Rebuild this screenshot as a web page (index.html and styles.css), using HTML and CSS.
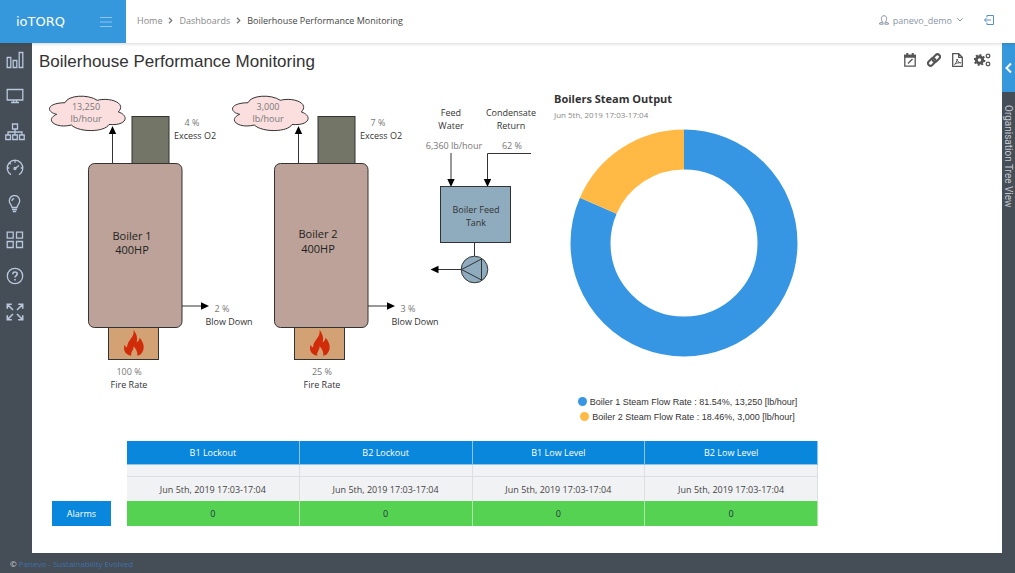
FILE: index.html
```html
<!DOCTYPE html>
<html lang="en">
  <head>
    <meta charset="UTF-8" />
    <meta name="viewport" content="width=device-width, initial-scale=1.0" />
    <title>Boilerhouse Performance Monitoring</title>
    <link rel="stylesheet" href="styles.css" />
  </head>
  <body>
    <header class="topbar">
      <div class="brand">
        <a class="logo" href="#">ioTORQ</a>
        <button class="menu-toggle" type="button" aria-label="Toggle menu">
          <svg width="12" height="10" viewBox="0 0 12 10"><path d="M0 .5h12M0 5h12M0 9.500h12" /></svg>
        </button>
      </div>
      <nav class="breadcrumb" aria-label="Breadcrumb">
        <a href="#">Home</a>
        <svg width="5" height="7" viewBox="0 0 5 7"><path d="M1 .8l2.700 2.700L1 6.200" /></svg>
        <a href="#">Dashboards</a>
        <svg width="5" height="7" viewBox="0 0 5 7"><path d="M1 .8l2.700 2.700L1 6.200" /></svg>
        <span class="current">Boilerhouse Performance Monitoring</span>
      </nav>
      <div class="account">
        <button class="user" type="button">
          <svg width="10" height="10" viewBox="0 0 10 10"><path d="M3.800 7.200C2.300 5.800 2.400 4.500 2.400 3.200 2.400 1.700 3.500.7 5 .7s2.600 1 2.600 2.500c0 1.300.1 2.600-1.400 4M3.800 7.200L.6 8v1.200h3.600zM6.200 7.200l3.200.8v1.200H5.800z" /></svg>
          panevo_demo
          <svg width="8" height="6" viewBox="0 0 8 6"><path d="M1.200 1.200L4 4l2.800-2.800" /></svg>
        </button>
        <a class="logout" href="#" aria-label="Log out">
          <svg width="10" height="10" viewBox="0 0 10 10"><path d="M3 2.500V.5h6.500v9H3v-2M.5 5H7M2.500 3l-2 2 2 2" /></svg>
        </a>
      </div>
    </header>

    <div class="page">
      <nav class="sidebar" aria-label="Main">
        <a href="#" aria-label="Reports">
          <svg viewBox="0 0 18 18"><path d="M1.200 6.500h3.600v10H1.200zM7.200 9.500h3.600v7H7.200zM13.200 1.500h3.600v15h-3.600z" /></svg>
        </a>
        <a href="#" aria-label="Dashboards">
          <svg viewBox="0 0 18 18"><path d="M1.200 2.500h15.600v10.500H1.200zM7.500 13v2M10.500 13v2M5 15.500h8" /></svg>
        </a>
        <a href="#" aria-label="Organisation">
          <svg class="wide" viewBox="0 0 20 18"><path d="M7.500 1h5v5h-5zM.8 12h4.700v4.500H.8zM7.700 12h4.600v4.500H7.700zM14.500 12h4.700v4.500h-4.700zM10 6v6M3 12V9h14v3" /></svg>
        </a>
        <a href="#" aria-label="Performance">
          <svg viewBox="0 0 18 18"><path d="M5 15.700A7.800 7.800 0 1 1 13 15.700M9 1.500v2.300M3.500 3.800l1.400 1.400M1.300 9h2M14.700 9h2M9 9.500l4-3" /><circle cx="9" cy="9.500" r="1" /></svg>
        </a>
        <a href="#" aria-label="Energy">
          <svg viewBox="0 0 18 18"><path d="M6 12.500c0-2.500-2.700-3.500-2.700-6.800a5.200 5.200 0 0 1 10.400 0c0 3.300-2.700 4.300-2.700 6.800zM6 14.500h5M6.800 16.500h3.400M6 6c0-1.300.9-2.300 2.200-2.400" /></svg>
        </a>
        <a href="#" aria-label="Widgets">
          <svg viewBox="0 0 18 18"><path d="M1.200 1.200h6v6h-6zM10.500 1.200h6v6h-6zM1.200 10.500h6v6h-6zM10.500 10.500h6v6h-6z" /></svg>
        </a>
        <a href="#" aria-label="Help">
          <svg viewBox="0 0 18 18"><circle cx="9" cy="9" r="7.700" /><path class="bold" d="M6.800 7.200c0-1.300 1-2.200 2.200-2.200s2.200.8 2.200 2c0 1.600-2.200 1.700-2.200 3.600M9 12v1.500" /></svg>
        </a>
        <a href="#" aria-label="Full screen">
          <svg viewBox="0 0 18 18"><path class="bold" d="M7 7L1.500 1.500M1.300 5.800V1.300h4.500M11 7l5.500-5.500M12.200 1.300h4.500v4.500M7 11l-5.500 5.500M1.300 12.200v4.500h4.500M11 11l5.500 5.500M12.200 16.700h4.500v-4.500" /></svg>
        </a>
      </nav>

      <main class="content">
        <div class="title-row">
          <h1>Boilerhouse Performance Monitoring</h1>
          <div class="tools">
            <button type="button" aria-label="Date range">
              <svg width="12" height="14" viewBox="0 0 12 14"><path class="line" d="M.8 2.500h10.400v10.700H.8zM4 10.500l4.500-4.500" /><path class="fill" d="M0 1.800h12v3H0zM2.300 0h2v2h-2zM7.700 0h2v2h-2z" /></svg>
            </button>
            <button type="button" aria-label="Copy link">
              <svg width="14" height="14" viewBox="0 0 14 14"><g class="line thick"><rect x="5" y="2.500" width="8.500" height="5" rx="2.500" transform="rotate(-45 9.250 5)" /><rect x=".5" y="6.500" width="8.500" height="5" rx="2.500" transform="rotate(-45 4.750 9)" /></g></svg>
            </button>
            <button type="button" aria-label="Export PDF">
              <svg width="11" height="14" viewBox="0 0 11 14"><path class="line" d="M.7.700h6l3.600 3.600v9H.7zM6.700.7v3.600h3.600" /><path class="thin" d="M2.300 11.500C4 10.500 5.200 8 5 6c.3 2.300 1.800 3.600 3.800 3.800-2-.2-4 .2-6 1.300" /></svg>
            </button>
            <button type="button" aria-label="Settings">
              <svg width="17" height="14" viewBox="0 0 17 14"><circle class="cog" cx="5.500" cy="7" r="3.200" /><circle class="teeth" cx="5.500" cy="7" r="4.900" pathLength="16" /><circle class="line" cx="14" cy="3" r="1.800" /><circle class="line" cx="14" cy="11" r="1.800" /></svg>
            </button>
          </div>
        </div>

        <div class="widgets">
          <svg class="diagram" viewBox="39 90 505 304" role="img" aria-label="Boilerhouse diagram">
            <defs>
              <path id="cloud" d="M56.700 114.300C46 112 46 103 65 102.700C68 95 88 94 97.300 100.300C110 97 127 103 118.300 112C129 115 128 126 109 124.500C105 132 80 133 71.300 125C56 129 44 120 56.700 114.300Z" />
              <g id="boiler">
                <rect class="stack" x="132" y="116.500" width="37" height="47" />
                <rect class="firebox" x="108.500" y="327.500" width="50" height="32" />
                <rect class="vessel" x="88.500" y="163.500" width="93.500" height="164" rx="6" />
                <path class="pipe" d="M112.500 163V132M182 306h21" />
                <path class="head" d="M112.500 126l3.700 8h-7.400zM209 306l-8 3.700v-7.400z" />
                <path class="flame" d="M133.600 330c3.400 4 4.200 9 3 12.500c1.800-1 2.700-2.700 3-4.700c4.800 5.500 5.400 11.500 1.800 15.700c-1.200 1.500-2.600 2-4 2.300c.3-4-1.400-7-3.800-9.600c.2 4-2.800 4.500-2.400 9.600c-6-1-8.500-6-6.500-11c.5 1.500 1.200 2.300 2.300 2.800c.3-8 7.600-9.600 6.600-17.600z" />
              </g>
            </defs>

            <use href="#cloud" class="cloud" />
            <use href="#boiler" />
            <text class="value" x="86" y="110">13,250</text>
            <text class="value" x="86" y="122">lb/hour</text>
            <text class="value" x="192" y="126">4 %</text>
            <text x="195" y="139">Excess O2</text>
            <text class="name" x="132" y="240">Boiler 1</text>
            <text class="name" x="132" y="254">400HP</text>
            <text class="value" x="222" y="312">2 %</text>
            <text x="229" y="325">Blow Down</text>
            <text class="value" x="129" y="375">100 %</text>
            <text x="129" y="388">Fire Rate</text>

            <use href="#cloud" class="cloud" x="183" />
            <use href="#boiler" x="186" />
            <text class="value" x="268" y="110">3,000</text>
            <text class="value" x="268" y="122">lb/hour</text>
            <text class="value" x="378" y="126">7 %</text>
            <text x="381" y="139">Excess O2</text>
            <text class="name" x="318" y="238">Boiler 2</text>
            <text class="name" x="318" y="253">400HP</text>
            <text class="value" x="408" y="312">3 %</text>
            <text x="415" y="325">Blow Down</text>
            <text class="value" x="322" y="375">25 %</text>
            <text x="322" y="388">Fire Rate</text>

            <!-- feed tank and pump -->
            <text x="451" y="116">Feed</text>
            <text x="451" y="129">Water</text>
            <text x="511" y="116">Condensate</text>
            <text x="511" y="129">Return</text>
            <text class="value" x="454" y="149">6,360 lb/hour</text>
            <text class="value" x="512" y="149">62 %</text>
            <path class="pipe" d="M451 153v28M531 153.500h-43.500V181M474.500 243v13M461 269.500h-24" />
            <path class="head" d="M451 187l-3.700-8h7.400zM487.500 187l-3.700-8h7.400zM430.500 269.500l8-3.700v7.400z" />
            <rect class="tank" x="440.500" y="186.500" width="70" height="56" />
            <text x="476" y="213">Boiler Feed</text>
            <text x="476" y="226">Tank</text>
            <circle class="tank" cx="474.500" cy="269.500" r="13.300" />
            <path class="tank" d="M461.500 269.500L481.500 259v21z" />
          </svg>

          <section class="chart">
            <h2>Boilers Steam Output</h2>
            <p class="period">Jun 5th, 2019 17:03-17:04</p>
            <svg class="donut" viewBox="0 0 228 228" role="img" aria-label="Steam output share">
              <circle class="slice-1" cx="114" cy="114" r="93.500" pathLength="100" />
              <circle class="slice-2" cx="114" cy="114" r="93.500" pathLength="100" />
            </svg>
            <ul class="legend">
              <li><i class="dot blue"></i>Boiler 1 Steam Flow Rate : 81.54%, 13,250 [lb/hour]</li>
              <li><i class="dot orange"></i>Boiler 2 Steam Flow Rate : 18.46%, 3,000 [lb/hour]</li>
            </ul>
          </section>
        </div>

        <div class="alarms">
          <button class="alarm-btn" type="button">Alarms</button>
          <table>
            <thead>
              <tr>
                <th>B1 Lockout</th>
                <th>B2 Lockout</th>
                <th>B1 Low Level</th>
                <th>B2 Low Level</th>
              </tr>
            </thead>
            <tbody>
              <tr class="spacer"><td></td><td></td><td></td><td></td></tr>
              <tr class="dates">
                <td>Jun 5th, 2019 17:03-17:04</td>
                <td>Jun 5th, 2019 17:03-17:04</td>
                <td>Jun 5th, 2019 17:03-17:04</td>
                <td>Jun 5th, 2019 17:03-17:04</td>
              </tr>
              <tr class="ok"><td>0</td><td>0</td><td>0</td><td>0</td></tr>
            </tbody>
          </table>
        </div>
      </main>

      <aside class="tree">
        <button type="button" aria-label="Open tree view">
          <svg width="7" height="12" viewBox="0 0 7 12"><path d="M6 1.500L1.500 6 6 10.500" /></svg>
        </button>
        <span>Organisation Tree View</span>
      </aside>
    </div>

    <footer class="footer">© <a href="#">Panevo - Sustainability Evolved</a></footer>
  </body>
</html>
```
FILE: styles.css
```css
* {
  box-sizing: border-box;
  margin: 0;
  padding: 0;
}

body {
  min-height: 100vh;
  display: flex;
  flex-direction: column;
  background: #454d57;
  color: #333;
  font-family: "Open Sans", sans-serif;
  font-size: 9px;
}

a {
  text-decoration: none;
}

button {
  background: none;
  border: 0;
  font: inherit;
  cursor: pointer;
}

svg {
  display: block;
  flex-shrink: 0;
  fill: none;
}

/* header */
.topbar {
  position: relative;
  z-index: 1;
  display: flex;
  height: 43px;
  background: #fff;
  box-shadow: 0 1px 3px rgba(50, 50, 50, 0.2);
}

.brand {
  width: 126px;
  padding: 0 14px 0 16px;
  display: flex;
  align-items: center;
  justify-content: space-between;
  background: #3598dc;
}

.logo {
  color: #fff;
  font-family: "DejaVu Sans", sans-serif;
  font-size: 13px;
}

.menu-toggle svg {
  stroke: #8cc4ec;
}

.breadcrumb {
  flex: 1;
  display: flex;
  align-items: center;
  gap: 6px;
  padding: 0 0 3px 11px;
}

.breadcrumb a {
  color: #888;
}

.breadcrumb svg {
  stroke: #777;
  stroke-width: 1.3;
}

.breadcrumb .current {
  color: #444;
}

.account {
  display: flex;
  align-items: center;
  gap: 20px;
  padding: 0 21px 3px 0;
}

.user {
  display: flex;
  align-items: center;
  gap: 4px;
  color: #8a96a8;
}

.user svg {
  stroke: #8a96a8;
}

.logout svg {
  stroke: #5b8fc4;
}

/* page columns */
.page {
  flex: 1;
  display: flex;
}

.sidebar {
  width: 32px;
  padding: 8px 0;
  display: flex;
  flex-direction: column;
  gap: 18px;
}

.sidebar a {
  display: flex;
  width: 29px;
  justify-content: center;
}

.sidebar svg {
  width: 18px;
  height: 18px;
  stroke: #b8c7dc;
  stroke-width: 1.3;
}

.sidebar .wide {
  width: 20px;
}

.sidebar .bold {
  stroke-width: 1.6;
}

.content {
  flex: 1;
  min-width: 0;
  padding: 0 11px 27px 7px;
  background: #fff;
}

.title-row {
  display: flex;
  justify-content: space-between;
  align-items: center;
  padding-top: 7px;
  margin-bottom: 16px;
}

h1 {
  color: #333;
  font-family: "Liberation Sans", Arial, sans-serif;
  font-size: 17px;
  font-weight: normal;
  line-height: 24px;
}

.tools {
  display: flex;
  align-items: center;
  gap: 11px;
  padding-bottom: 5px;
}

.tools .line {
  stroke: #555;
  stroke-width: 1.3;
}

.tools .thick {
  stroke-width: 2;
}

.tools .thin {
  stroke: #555;
}

.tools .fill {
  fill: #555;
}

.tools .cog {
  stroke: #555;
  stroke-width: 3;
}

.tools .teeth {
  stroke: #555;
  stroke-width: 2;
  stroke-dasharray: 1 1;
}

/* boiler diagram */
.widgets {
  display: flex;
  align-items: flex-start;
  gap: 10px;
}

.diagram {
  width: 505px;
  height: 304px;
}

.diagram text {
  fill: #333;
  font-size: 9px;
  text-anchor: middle;
}

.diagram .value {
  fill: #777;
}

.diagram .name {
  fill: #222;
  font-size: 11px;
}

.cloud {
  fill: #fbdfdf;
  stroke: #333;
}

.stack,
.vessel,
.firebox,
.tank {
  stroke: #333;
}

.stack {
  fill: #737567;
}

.vessel {
  fill: #bca298;
}

.firebox {
  fill: #d2a274;
}

.flame {
  fill: #d02c0a;
}

.tank {
  fill: #8fabbe;
}

.pipe {
  stroke: #333;
}

.head {
  fill: #000;
}

/* steam chart */
.chart {
  width: 260px;
}

.chart h2 {
  font-size: 11px;
  line-height: 18px;
}

.period {
  color: #888;
  font-size: 8px;
  line-height: 14px;
}

.donut {
  width: 228px;
  height: 228px;
  margin: 7px auto 37px;
}

.donut circle {
  stroke-width: 40;
  transform: rotate(-90deg);
  transform-origin: center;
}

.slice-1 {
  stroke: #3796e4;
  stroke-dasharray: 81.54 100;
}

.slice-2 {
  stroke: #ffb944;
  stroke-dasharray: 18.46 100;
  stroke-dashoffset: -81.54;
}

.legend {
  list-style: none;
  padding-left: 7px;
  font-family: "Liberation Sans", Arial, sans-serif;
}

.legend li {
  display: flex;
  align-items: center;
  justify-content: center;
  gap: 3px;
  height: 15px;
}

.dot {
  width: 9px;
  height: 9px;
  border-radius: 50%;
}

.blue {
  background: #3796e4;
}

.orange {
  background: #ffb944;
}

/* alarms */
.alarms {
  display: flex;
  align-items: flex-end;
  gap: 16px;
  max-width: 779px;
  margin-top: 17px;
  padding-left: 13px;
}

.alarm-btn {
  width: 59px;
  height: 25px;
  background: #0887dc;
  color: #fff;
}

table {
  flex: 1;
  table-layout: fixed;
  border-spacing: 0;
  text-align: center;
}

th {
  height: 24px;
  background: #0887dc;
  border-right: 1px solid #8cc5ee;
  border-bottom: 1px solid #8cc5ee;
  color: #fff;
  font-weight: normal;
}

td {
  height: 24px;
  background: #f1f2f4;
  border-right: 1px solid #dcdfe2;
  color: #444;
}

.spacer td {
  height: 12px;
  border-bottom: 1px solid #dcdfe2;
}

.ok td {
  height: 25px;
  background: #55d252;
  border-color: #a9e6a8;
  color: #234;
}

/* tree view tab */
.tree {
  width: 13px;
  display: flex;
  flex-direction: column;
  align-items: center;
  gap: 13px;
}

.tree button {
  width: 13px;
  height: 49px;
  display: flex;
  align-items: center;
  justify-content: center;
  background: #3598dc;
}

.tree svg {
  stroke: #fff;
  stroke-width: 2;
}

.tree span {
  color: #c3c8ce;
  font-family: Roboto, sans-serif;
  font-size: 10px;
  line-height: 13px;
  writing-mode: vertical-rl;
}

.footer {
  height: 20px;
  padding-left: 10px;
  color: #ddd;
  font-size: 8px;
  line-height: 21px;
}

.footer a {
  color: #3d73aa;
}
```
